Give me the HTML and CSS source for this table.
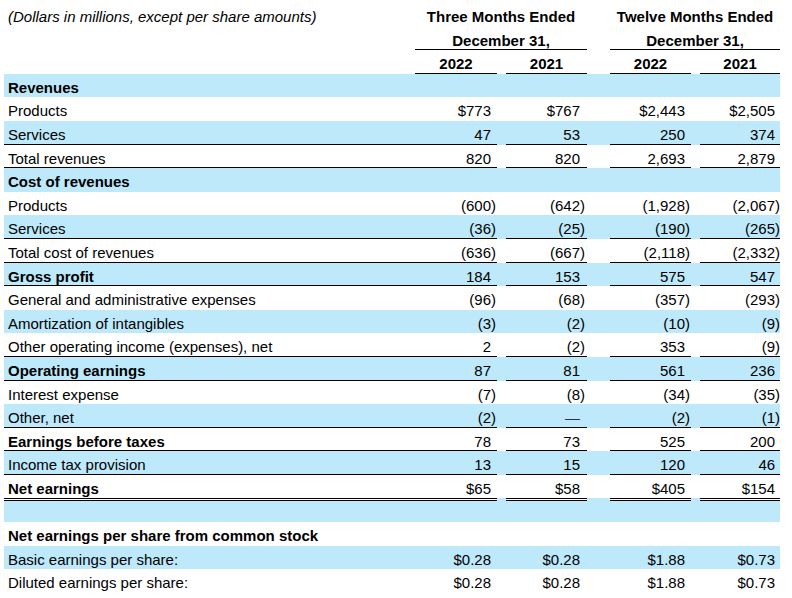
FILE: index.html
```html
<!DOCTYPE html>
<html>
<head>
<meta charset="utf-8">
<link rel="stylesheet" href="styles.css">
</head>
<body>
<table class="fin">
  <colgroup>
    <col class="w-lbl"><col class="w-c1"><col class="w-s1"><col class="w-c2"><col class="w-s2"><col class="w-c3"><col class="w-s3"><col class="w-c4">
  </colgroup>
  <tbody>
    <tr>
      <td class="lbl title">(Dollars in millions, except per share amounts)</td>
      <td class="hd" colspan="3">Three Months Ended</td>
      <td></td>
      <td class="hd" colspan="3">Twelve Months Ended</td>
    </tr>
    <tr>
      <td class="lbl">&nbsp;</td>
      <td class="hd ul" colspan="3">December 31,</td>
      <td></td>
      <td class="hd ul" colspan="3">December 31,</td>
    </tr>
    <tr>
      <td class="lbl">&nbsp;</td>
      <td class="hd ul">2022</td><td></td><td class="hd ul">2021</td><td></td><td class="hd ul">2022</td><td></td><td class="hd ul">2021</td>
    </tr>

    <tr class="blue bold"><td class="lbl">Revenues</td><td class="v c1"></td><td></td><td class="v c2"></td><td></td><td class="v c3"></td><td></td><td class="v c4"></td></tr>
    <tr><td class="lbl">Products</td><td class="v c1">$773</td><td></td><td class="v c2">$767</td><td></td><td class="v c3">$2,443</td><td></td><td class="v c4">$2,505</td></tr>
    <tr class="blue ln"><td class="lbl">Services</td><td class="v c1">47</td><td></td><td class="v c2">53</td><td></td><td class="v c3">250</td><td></td><td class="v c4">374</td></tr>
    <tr class="ln"><td class="lbl">Total revenues</td><td class="v c1">820</td><td></td><td class="v c2">820</td><td></td><td class="v c3">2,693</td><td></td><td class="v c4">2,879</td></tr>
    <tr class="blue bold"><td class="lbl">Cost of revenues</td><td class="v c1"></td><td></td><td class="v c2"></td><td></td><td class="v c3"></td><td></td><td class="v c4"></td></tr>
    <tr><td class="lbl">Products</td><td class="v c1">(600<span class="p">)</span></td><td></td><td class="v c2">(642<span class="p">)</span></td><td></td><td class="v c3">(1,928<span class="p">)</span></td><td></td><td class="v c4">(2,067<span class="p">)</span></td></tr>
    <tr class="blue ln"><td class="lbl">Services</td><td class="v c1">(36<span class="p">)</span></td><td></td><td class="v c2">(25<span class="p">)</span></td><td></td><td class="v c3">(190<span class="p">)</span></td><td></td><td class="v c4">(265<span class="p">)</span></td></tr>
    <tr class="ln"><td class="lbl">Total cost of revenues</td><td class="v c1">(636<span class="p">)</span></td><td></td><td class="v c2">(667<span class="p">)</span></td><td></td><td class="v c3">(2,118<span class="p">)</span></td><td></td><td class="v c4">(2,332<span class="p">)</span></td></tr>
    <tr class="blue bold ln"><td class="lbl">Gross profit</td><td class="v c1">184</td><td></td><td class="v c2">153</td><td></td><td class="v c3">575</td><td></td><td class="v c4">547</td></tr>
    <tr><td class="lbl">General and administrative expenses</td><td class="v c1">(96<span class="p">)</span></td><td></td><td class="v c2">(68<span class="p">)</span></td><td></td><td class="v c3">(357<span class="p">)</span></td><td></td><td class="v c4">(293<span class="p">)</span></td></tr>
    <tr class="blue"><td class="lbl">Amortization of intangibles</td><td class="v c1">(3<span class="p">)</span></td><td></td><td class="v c2">(2<span class="p">)</span></td><td></td><td class="v c3">(10<span class="p">)</span></td><td></td><td class="v c4">(9<span class="p">)</span></td></tr>
    <tr class="ln"><td class="lbl">Other operating income (expenses), net</td><td class="v c1">2</td><td></td><td class="v c2">(2<span class="p">)</span></td><td></td><td class="v c3">353</td><td></td><td class="v c4">(9<span class="p">)</span></td></tr>
    <tr class="blue bold ln"><td class="lbl">Operating earnings</td><td class="v c1">87</td><td></td><td class="v c2">81</td><td></td><td class="v c3">561</td><td></td><td class="v c4">236</td></tr>
    <tr><td class="lbl">Interest expense</td><td class="v c1">(7<span class="p">)</span></td><td></td><td class="v c2">(8<span class="p">)</span></td><td></td><td class="v c3">(34<span class="p">)</span></td><td></td><td class="v c4">(35<span class="p">)</span></td></tr>
    <tr class="blue ln"><td class="lbl">Other, net</td><td class="v c1">(2<span class="p">)</span></td><td></td><td class="v c2 dash">—</td><td></td><td class="v c3">(2<span class="p">)</span></td><td></td><td class="v c4">(1<span class="p">)</span></td></tr>
    <tr class="bold ln"><td class="lbl">Earnings before taxes</td><td class="v c1">78</td><td></td><td class="v c2">73</td><td></td><td class="v c3">525</td><td></td><td class="v c4">200</td></tr>
    <tr class="blue ln"><td class="lbl">Income tax provision</td><td class="v c1">13</td><td></td><td class="v c2">15</td><td></td><td class="v c3">120</td><td></td><td class="v c4">46</td></tr>
    <tr class="bold"><td class="lbl">Net earnings</td><td class="v c1">$65</td><td></td><td class="v c2">$58</td><td></td><td class="v c3">$405</td><td></td><td class="v c4">$154</td></tr>
    <tr class="blue dbl"><td class="lbl">&nbsp;</td><td class="v c1"></td><td></td><td class="v c2"></td><td></td><td class="v c3"></td><td></td><td class="v c4"></td></tr>
    <tr class="bold"><td class="lbl">Net earnings per share from common stock</td><td class="v c1"></td><td></td><td class="v c2"></td><td></td><td class="v c3"></td><td></td><td class="v c4"></td></tr>
    <tr class="blue"><td class="lbl">Basic earnings per share:</td><td class="v c1">$0.28</td><td></td><td class="v c2">$0.28</td><td></td><td class="v c3">$1.88</td><td></td><td class="v c4">$0.73</td></tr>
    <tr><td class="lbl">Diluted earnings per share:</td><td class="v c1">$0.28</td><td></td><td class="v c2">$0.28</td><td></td><td class="v c3">$1.88</td><td></td><td class="v c4">$0.73</td></tr>
  </tbody>
</table>
</body>
</html>
```

FILE: styles.css
```css
html, body {
  margin: 0;
  padding: 0;
  background: #ffffff;
}

body {
  font-family: "Liberation Sans", Arial, sans-serif;
  font-size: 15px;
  color: #000000;
}

.fin {
  border-collapse: separate;
  border-spacing: 0;
  table-layout: fixed;
  width: 776px;
  margin: 3px 0 0 4px;
}

.w-lbl { width: 411px; }
.w-c1 { width: 82px; }
.w-s1 { width: 9px; }
.w-c2 { width: 81px; }
.w-s2 { width: 23px; }
.w-c3 { width: 81px; }
.w-s3 { width: 9px; }
.w-c4 { width: 80px; }

.fin td {
  padding: 5px 0 1.6px 0;
  line-height: 17px;
  white-space: nowrap;
  vertical-align: top;
}

.fin td.lbl {
  padding-left: 4px;
  text-align: left;
}

.title {
  font-style: italic;
}

.hd {
  font-weight: bold;
  text-align: center;
}

.ul {
  box-shadow: inset 0 -1px 0 #000000;
}

.v {
  text-align: right;
}

.fin td.c1 { padding-right: 6px; }
.fin td.c2 { padding-right: 7px; }
.fin td.c3 { padding-right: 6px; }
.fin td.c4 { padding-right: 5px; }

.p {
  margin-right: -5px;
}

.dash {
  color: #333333;
}

.blue td {
  background: #bde9fb;
}

.bold td.lbl {
  font-weight: bold;
}

.ln td.lbl,
.ln td.v {
  box-shadow: inset 0 -1px 0 #000000;
}

.dbl td.lbl,
.dbl td.v {
  box-shadow: inset 0 1px 0 #000000, inset 0 2px 0 #ffffff, inset 0 3px 0 #000000;
}
```
